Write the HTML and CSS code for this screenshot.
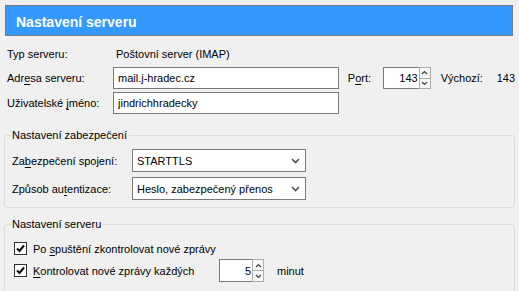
FILE: index.html
```html
<html>
<head>
    <meta charset="UTF-8">
    <title>Nastavení serveru</title>
    <link rel="stylesheet" href="styles.css">
</head>
<body>
<div class="page">
    <div class="title-bar">Nastavení serveru</div>

    <div class="server-rows">
        <div class="row">
            <span class="label">Typ serveru:</span>
            <span class="value">Poštovní server (IMAP)</span>
        </div>
        <div class="row">
            <label class="label" for="host">Adr<u>e</u>sa serveru:</label>
            <input class="text-field host" id="host" type="text" value="mail.j-hradec.cz">
            <label class="port-label" for="port">P<u>o</u>rt:</label>
            <div class="spin port">
                <input id="port" type="text" value="143">
                <div class="spin-buttons">
                    <span class="spin-up"><svg width="7" height="5" viewBox="0 0 7 5"><path d="M1 4 L3.5 1.5 L6 4" fill="none" stroke="#404040" stroke-width="1.2"/></svg></span>
                    <span class="spin-down"><svg width="7" height="5" viewBox="0 0 7 5"><path d="M1 1 L3.5 3.5 L6 1" fill="none" stroke="#404040" stroke-width="1.2"/></svg></span>
                </div>
            </div>
            <span class="default-label">Výchozí:</span>
            <span class="default-value">143</span>
        </div>
        <div class="row">
            <label class="label" for="user">Uživatelské <u>j</u>méno:</label>
            <input class="text-field host" id="user" type="text" value="jindrichhradecky">
        </div>
    </div>

    <fieldset class="group security">
        <legend>Nastavení zabezpečení</legend>
        <div class="select-row">
            <label class="select-label" for="conn">Za<u>b</u>ezpečení spojení:</label>
            <div class="select-wrap">
                <select id="conn">
                    <option>STARTTLS</option>
                </select>
                <svg class="chevron" width="9" height="6" viewBox="0 0 9 6"><path d="M1 1 L4.5 4.5 L8 1" fill="none" stroke="#505050" stroke-width="1.6"/></svg>
            </div>
        </div>
        <div class="select-row">
            <label class="select-label" for="auth">Způsob au<u>t</u>entizace:</label>
            <div class="select-wrap">
                <select id="auth">
                    <option>Heslo, zabezpečený přenos</option>
                </select>
                <svg class="chevron" width="9" height="6" viewBox="0 0 9 6"><path d="M1 1 L4.5 4.5 L8 1" fill="none" stroke="#505050" stroke-width="1.6"/></svg>
            </div>
        </div>
    </fieldset>

    <fieldset class="group checks">
        <legend>Nastavení serveru</legend>
        <div class="check-row first">
            <span class="check"><svg width="11" height="11" viewBox="0 0 11 11"><path d="M2 5.5 L4.5 8 L9 2.5" fill="none" stroke="#000" stroke-width="2"/></svg></span>
            <span>Po <u>s</u>puštění zkontrolovat nové zprávy</span>
        </div>
        <div class="check-row">
            <span class="check"><svg width="11" height="11" viewBox="0 0 11 11"><path d="M2 5.5 L4.5 8 L9 2.5" fill="none" stroke="#000" stroke-width="2"/></svg></span>
            <span class="check-text"><u>K</u>ontrolovat nové zprávy každých</span>
            <div class="spin minutes">
                <input type="text" value="5">
                <div class="spin-buttons">
                    <span class="spin-up"><svg width="7" height="5" viewBox="0 0 7 5"><path d="M1 4 L3.5 1.5 L6 4" fill="none" stroke="#404040" stroke-width="1.2"/></svg></span>
                    <span class="spin-down"><svg width="7" height="5" viewBox="0 0 7 5"><path d="M1 1 L3.5 3.5 L6 1" fill="none" stroke="#404040" stroke-width="1.2"/></svg></span>
                </div>
            </div>
            <span class="unit">minut</span>
        </div>
    </fieldset>
</div>
</body>
</html>
```

FILE: styles.css
```css
:root {
    --bg: #F0F0F0;
    --text-color: #000000;
    --title-blue: #3399FF;
    --field-border: #7A7A7A;
    --group-border: #DCDCDC;
    --spin-border: #ACACAC;
}

body, html {
    margin: 0;
    padding: 0;
    font-family: 'Liberation Sans', Arial, sans-serif;
    font-size: 11px;
    background-color: var(--bg);
    color: var(--text-color);
    overflow: hidden;
}

u {
    text-decoration-thickness: 1px;
    text-underline-offset: 2px;
}

.page {
    padding: 0 4px;
}

.title-bar {
    margin: 5px 2px 0 1px;
    padding: 8px 10px 4px;
    line-height: 17px;
    background-color: var(--title-blue);
    border: 1px solid var(--field-border);
    color: white;
    font-size: 14px;
    font-weight: bold;
}

.server-rows {
    display: flex;
    flex-direction: column;
    gap: 3px;
    margin-top: 8px;
    padding-left: 3px;
}

.row {
    display: flex;
    align-items: center;
    height: 22px;
}

.row:first-child {
    height: 20px;
}

.label {
    width: 106px;
    flex-shrink: 0;
}

.value {
    padding-left: 3px;
}

.text-field {
    box-sizing: border-box;
    height: 22px;
    border: 1px solid var(--field-border);
    background: white;
    padding: 0 4px;
    font: inherit;
    color: var(--text-color);
    outline: none;
    border-radius: 0;
}

.host {
    width: 226px;
}

.port-label {
    width: 35px;
    margin-left: 9px;
}

.default-label {
    width: 56px;
    margin-left: 10px;
}

.spin {
    display: flex;
    height: 22px;
}

.spin input {
    box-sizing: border-box;
    flex: 1;
    width: 0;
    height: 22px;
    border: 1px solid var(--field-border);
    border-right: none;
    background: white;
    padding: 0 1px;
    text-align: right;
    font: inherit;
    color: var(--text-color);
    outline: none;
    border-radius: 0;
}

.spin-buttons {
    display: flex;
    flex-direction: column;
    width: 12px;
    border: 1px solid var(--spin-border);
    box-sizing: border-box;
    background: white;
}

.spin-up,
.spin-down {
    flex: 1;
    display: flex;
    align-items: center;
    justify-content: center;
    background: #F7F7F7;
}

.spin-up {
    border-bottom: 1px solid var(--spin-border);
}

.port {
    width: 48px;
}

.group {
    margin: 0;
    border: 1px solid var(--group-border);
    border-radius: 3px;
    padding: 6px 7px 7px;
}

.group legend {
    padding: 0 2px 0 1px;
    margin-left: -1px;
    line-height: 16px;
}

.security {
    margin-top: 13px;
}

.select-row {
    display: flex;
    align-items: center;
}

.select-row + .select-row {
    margin-top: 5px;
}

.select-label {
    width: 120px;
    flex-shrink: 0;
}

.select-wrap {
    position: relative;
    height: 23px;
}

.select-wrap select {
    appearance: none;
    -webkit-appearance: none;
    box-sizing: border-box;
    width: 174px;
    height: 23px;
    border: 1px solid var(--field-border);
    border-radius: 0;
    background: white;
    padding: 0 20px 0 4px;
    font: inherit;
    color: var(--text-color);
    outline: none;
}

.chevron {
    position: absolute;
    right: 6px;
    top: 9px;
    pointer-events: none;
}

.checks {
    margin-top: 8px;
    padding-top: 7px;
    padding-bottom: 20px;
}

.check-row {
    display: flex;
    align-items: center;
    height: 23px;
    margin-left: 2px;
}

.check-row.first {
    height: 19px;
    margin-bottom: 1px;
}

.check {
    box-sizing: border-box;
    width: 13px;
    height: 13px;
    border: 1px solid #333333;
    background: white;
    display: flex;
    margin-right: 6px;
}

.check-text {
    width: 186px;
}

.minutes {
    width: 45px;
    height: 23px;
}

.minutes input {
    height: 23px;
}

.unit {
    margin-left: 13px;
}
```
